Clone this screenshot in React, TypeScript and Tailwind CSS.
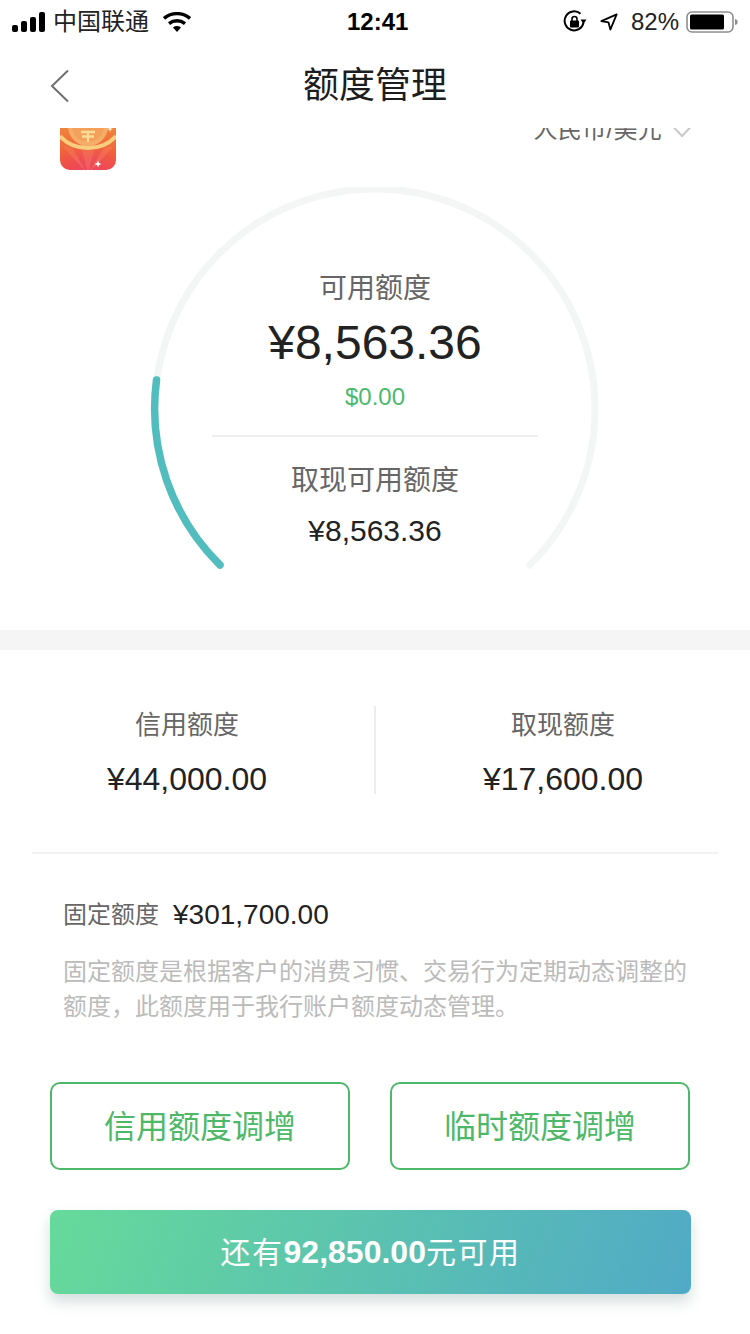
const font = "font-['Liberation_Sans','Noto_Sans_CJK_SC',sans-serif]"

function Signal() {
  return (
    <svg width="34" height="20" viewBox="0 0 34 20" className="ml-3">
      <rect x="0" y="13" width="6" height="7" rx="2" fill="#000" />
      <rect x="9" y="9" width="6" height="11" rx="2" fill="#000" />
      <rect x="18" y="5" width="6" height="15" rx="2" fill="#000" />
      <rect x="27" y="0" width="6" height="20" rx="2" fill="#000" />
    </svg>
  )
}

function Wifi() {
  return (
    <svg width="28" height="20" viewBox="0 0 28 20" className="ml-[14px]">
      <path d="M1 6.5C8.5 0 19.5 0 27 6.5" fill="none" stroke="#000" strokeWidth="3.4" />
      <path d="M6 11.6C10.8 7.8 17.2 7.8 22 11.6" fill="none" stroke="#000" strokeWidth="3.4" />
      <path d="M10 15.4C12.4 13.6 15.6 13.6 18 15.4L14 20Z" fill="#000" />
    </svg>
  )
}

function RotationLock() {
  return (
    <svg width="24" height="24" viewBox="0 0 24 24">
      <path d="M20.5 12.5A9.5 9.5 0 1 1 17.5 3.8" fill="none" stroke="#000" strokeWidth="2" />
      <path d="M17.5 9.5L23.5 9.5L20.5 14Z" fill="#000" />
      <rect x="7" y="10.5" width="9" height="7" rx="1" fill="#000" />
      <path d="M9 11V9a2.5 2.5 0 0 1 5 0v2" fill="none" stroke="#000" strokeWidth="1.6" />
    </svg>
  )
}

function LocationArrow() {
  return (
    <svg width="18" height="18" viewBox="0 0 20 20" className="ml-[13px]">
      <path d="M18.5 1.5L1.5 9L9.5 10.5L11.5 18.5Z" fill="none" stroke="#000" strokeWidth="2" strokeLinejoin="round" />
    </svg>
  )
}

function Battery() {
  return (
    <svg width="52" height="24" viewBox="0 0 52 24" className="ml-[7px]">
      <rect x="1" y="2" width="46" height="20" rx="5" fill="none" stroke="#8e8e8e" strokeWidth="1.6" />
      <rect x="4" y="4.5" width="34" height="15" rx="1.5" fill="#000" />
      <path d="M49 9c2 .4 2.6 1.4 2.6 3s-.6 2.6-2.6 3Z" fill="#8e8e8e" />
    </svg>
  )
}

function AppIcon() {
  return (
    <svg width="56" height="56" viewBox="0 0 56 56" className="block">
      <defs>
        <linearGradient id="iconBg" x1="0" y1="0" x2="0" y2="1">
          <stop offset="0.2" stopColor="#f0883c" />
          <stop offset="0.65" stopColor="#f0643a" />
          <stop offset="1" stopColor="#ee4c46" />
        </linearGradient>
        <radialGradient id="iconGlow" cx="0.5" cy="1" r="0.55">
          <stop offset="0" stopColor="#ee4468" stopOpacity="0.8" />
          <stop offset="1" stopColor="#ee4468" stopOpacity="0" />
        </radialGradient>
        <clipPath id="iconClip">
          <rect width="56" height="56" rx="10" />
        </clipPath>
      </defs>
      <g clipPath="url(#iconClip)">
        <rect width="56" height="56" fill="url(#iconBg)" />
        <rect width="56" height="56" fill="url(#iconGlow)" />
        <path d="M28 60L2 32L12 34ZM28 60L44 34L54 32ZM28 60L22 36L34 36Z" fill="#f7936a" opacity="0.3" />
        <circle cx="28" cy="12" r="20" fill="#f5ad68" />
        <circle cx="28" cy="12" r="16" fill="#f3a05a" />
        <path d="M0 22C14 38 42 38 56 22" fill="none" stroke="#f8cd7c" strokeWidth="4" />
        <path d="M21 18H35M22 22.5H34M28 18V28" stroke="#f9dc96" strokeWidth="2.4" fill="none" />
        <path d="M38 46.5l1 2.5 2.5 1-2.5 1-1 2.5-1-2.5-2.5-1 2.5-1Z" fill="#fff" />
        <path d="M50 12l.8 2.2 2.2.8-2.2.8-.8 2.2-.8-2.2-2.2-.8 2.2-.8Z" fill="#fff3d8" />
      </g>
    </svg>
  )
}

function Gauge() {
  return (
    <svg width="460" height="400" viewBox="0 0 460 400" className="absolute left-[145px] top-[59px]">
      <path d="M75 378A220 220 0 1 1 385 378" fill="none" stroke="#f4f5f5" strokeWidth="7" strokeLinecap="round" />
      <path d="M11.5 193A220 220 0 0 0 75 378" fill="none" stroke="#52bdbe" strokeWidth="7.5" strokeLinecap="round" />
    </svg>
  )
}

function LimitCell({ label, value }: { label: string; value: string }) {
  return (
    <div className="flex flex-1 flex-col items-center">
      <div className="text-[26px] leading-[38px] text-[#666]">{label}</div>
      <div className="mt-[16px] text-[32px] leading-[38px] text-[#222]">{value}</div>
    </div>
  )
}

export default function App() {
  return (
    <div className={`${font} h-[1334px] w-[750px] overflow-hidden bg-white`}>
      {/* status bar */}
      <div className="flex h-[44px] items-center text-black">
        <div className="flex w-[347px] items-center">
          <Signal />
          <span className="ml-[7px] text-[24px] leading-[30px] text-[#222]">中国联通</span>
          <Wifi />
        </div>
        <div className="text-[24px] font-bold leading-[30px]">12:41</div>
        <div className="flex flex-1 items-center justify-end pr-[12px]">
          <RotationLock />
          <LocationArrow />
          <span className="ml-[13px] text-[24px] leading-[30px] text-[#222]">82%</span>
          <Battery />
        </div>
      </div>

      {/* nav */}
      <div className="flex h-[84px] items-center px-[50px]">
        <svg width="20" height="34" viewBox="0 0 20 34" className="shrink-0">
          <path d="M18 1.5L2 17L18 32.5" fill="none" stroke="#707070" strokeWidth="2" />
        </svg>
        <h1 className="ml-[233px] text-[36px] font-normal leading-[44px] text-[#1d1d1d]">额度管理</h1>
      </div>

      {/* available limit, scrolled under the nav */}
      <div className="relative h-[502px] overflow-hidden">
        <Gauge />
        <div className="relative -mt-[14px] flex items-start justify-between pl-[60px] pr-[57px]">
          <AppIcon />
          <div className="mt-[1px] flex items-center">
            <span className="text-[24px] leading-[30px] tracking-[0.3px] text-[#666]">人民币/美元</span>
            <svg width="22" height="14" viewBox="0 0 22 14" className="ml-[9px] mt-[1px]">
              <path d="M1 1.5L11 12L21 1.5" fill="none" stroke="#c8c8c8" strokeWidth="2" />
            </svg>
          </div>
        </div>
        <div className="relative mt-[99px] flex flex-col items-center">
          <div className="text-[28px] leading-[40px] text-[#666]">可用额度</div>
          <div className="mt-[6px] text-[48px] leading-[56px] text-[#222]">¥8,563.36</div>
          <div className="mt-[11px] text-[24px] leading-[30px] text-[#4cb96c]">$0.00</div>
          <div className="mt-[23px] h-[2px] w-[326px] bg-[#eeeeee]" />
          <div className="mt-[24px] text-[28px] leading-[40px] text-[#666]">取现可用额度</div>
          <div className="mt-[12px] text-[30px] leading-[36px] text-[#222]">¥8,563.36</div>
        </div>
      </div>

      <div className="h-[20px] bg-[#f5f5f5]" />

      {/* credit / cash limits */}
      <div className="flex h-[202px] items-start pt-[56px]">
        <LimitCell label="信用额度" value="¥44,000.00" />
        <div className="h-[88px] w-[2px] bg-[#eeeeee]" />
        <LimitCell label="取现额度" value="¥17,600.00" />
      </div>
      <div className="mx-[32px] h-[2px] bg-[#f2f2f2]" />

      {/* fixed limit */}
      <div className="mt-[43px] px-[63px]">
        <div className="flex items-center">
          <span className="text-[24px] leading-[36px] text-[#666]">固定额度</span>
          <span className="ml-[14px] text-[28px] leading-[36px] text-[#222]">¥301,700.00</span>
        </div>
        <p className="mt-[21px] w-[630px] text-[24px] leading-[35px] text-[#bbbbbb]">
          固定额度是根据客户的消费习惯、交易行为定期动态调整的额度，此额度用于我行账户额度动态管理。
        </p>
      </div>

      {/* actions */}
      <div className="mt-[58px] flex gap-[40px] px-[50px]">
        <button className="h-[88px] w-[300px] rounded-[10px] border-2 border-[#4eb868] pt-[2px] text-[32px] text-[#4eb868]">信用额度调增</button>
        <button className="h-[88px] w-[300px] rounded-[10px] border-2 border-[#4eb868] pt-[2px] text-[32px] text-[#4eb868]">临时额度调增</button>
      </div>
      <button className="mx-[50px] mt-[40px] flex h-[84px] w-[641px] items-center justify-center rounded-[8px] bg-linear-[110deg] from-[#66da9a] to-[#50aac6] text-[30px] tracking-[1.5px] text-white shadow-[0_8px_14px_rgba(60,110,100,0.22)]">
        还有<span className="text-[32px] font-bold tracking-normal">92,850.00</span>元可用
      </button>
    </div>
  )
}
